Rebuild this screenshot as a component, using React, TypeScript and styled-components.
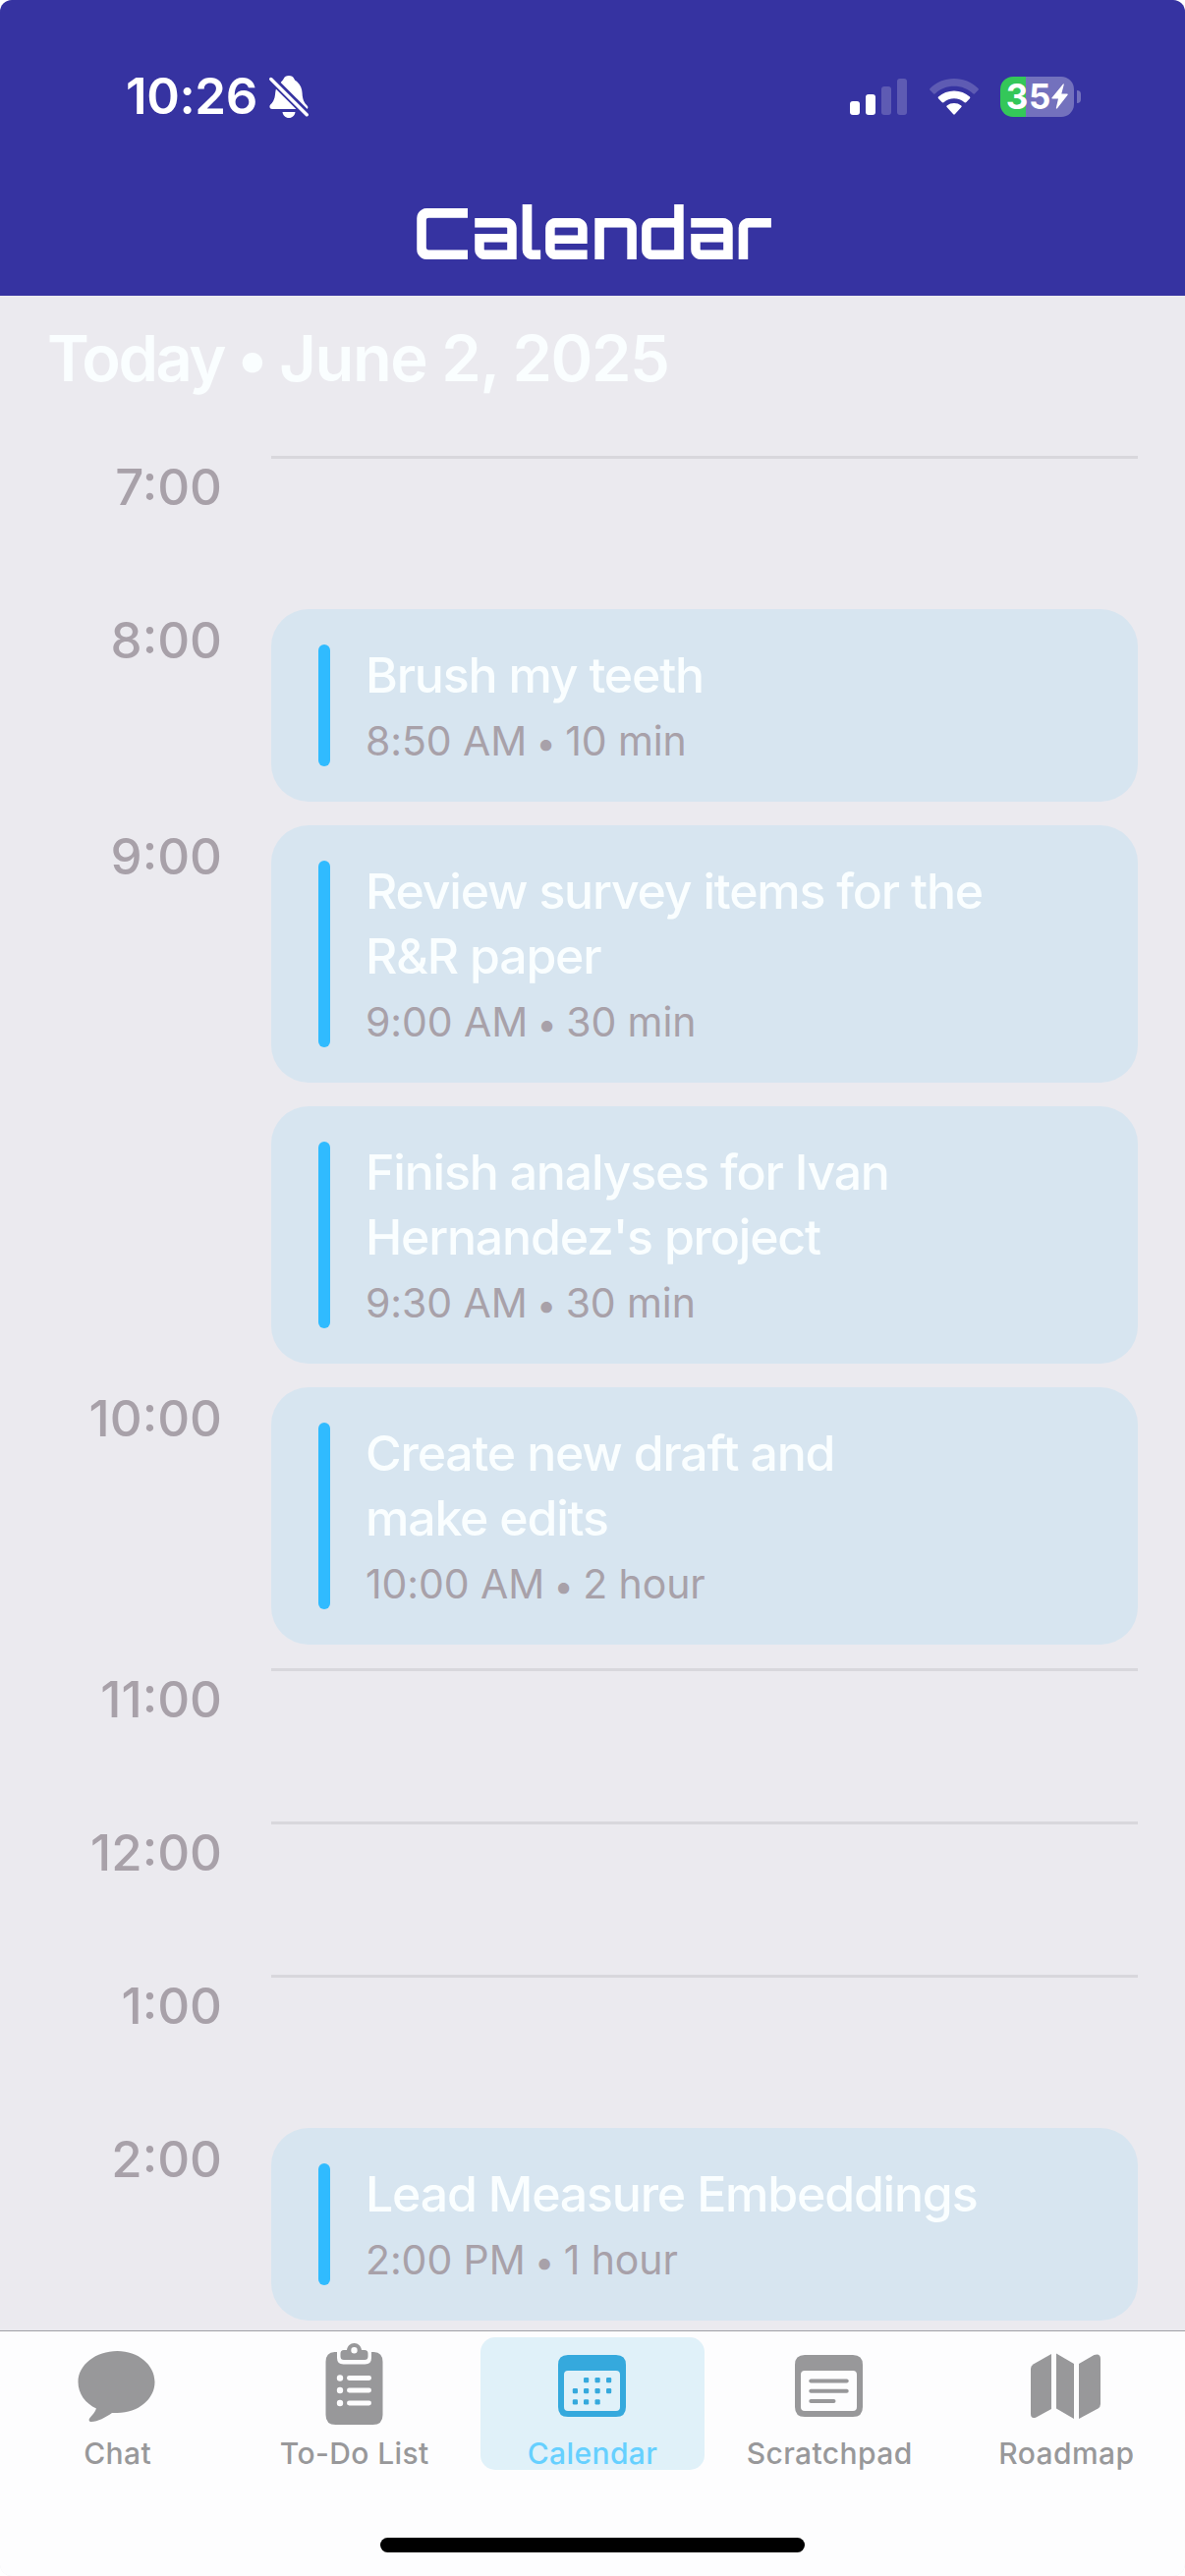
import React from "react";
import styled, { createGlobalStyle } from "styled-components";

const GlobalStyle = createGlobalStyle`
  *, *::before, *::after { box-sizing: border-box; }
  body { margin: 0; background: #ffffff; -webkit-font-smoothing: antialiased; }
`;

const Screen = styled.div`
  width: 1206px;
  height: 2622px;
  display: flex;
  flex-direction: column;
  overflow: hidden;
  border-radius: 12px;
  background: #ebeaef;
  font-family: Inter, "Liberation Sans", sans-serif;
`;

const Header = styled.header`
  flex: none;
  height: 301px;
  display: flex;
  flex-direction: column;
  background: #3633a1;
  color: #ffffff;
`;

const StatusBar = styled.div`
  height: 192px;
  padding: 4px 106px 0 128px;
  display: flex;
  align-items: center;
  justify-content: space-between;
`;

const StatusLeft = styled.div`
  display: flex;
  align-items: center;
  gap: 12px;
`;

const Clock = styled.span`
  font-size: 51px;
  line-height: 60px;
  font-weight: 600;
  letter-spacing: -0.4px;
`;

const StatusRight = styled.div`
  display: flex;
  align-items: center;
  gap: 22.5px;
`;

const Battery = styled.div`
  display: flex;
  align-items: center;
  gap: 3px;
`;

const BatteryBody = styled.div`
  width: 75px;
  height: 41px;
  border-radius: 13px;
  display: flex;
  align-items: center;
  justify-content: center;
  background: linear-gradient(90deg, #34c759 0 26px, #7371bd 26px);
  font-size: 35px;
  line-height: 41px;
  font-weight: 700;
  letter-spacing: 0.8px;
`;

const BatteryTip = styled.div`
  width: 4px;
  height: 13px;
  border-radius: 0 4px 4px 0;
  background: #7371bd;
`;

const ScreenTitle = styled.h1`
  margin: 0;
  height: 88px;
  line-height: 88px;
  text-align: center;
  font-family: Orbitron, "DejaVu Sans", sans-serif;
  font-size: 72px;
  font-weight: 700;
`;

const Agenda = styled.main`
  flex: none;
  height: 2071px;
  padding: 24px 48px 0;
  overflow: hidden;
`;

const DayHeading = styled.h2`
  margin: 0 0 59px;
  height: 80px;
  line-height: 80px;
  font-size: 65px;
  font-weight: 600;
  letter-spacing: -1.4px;
  color: #fafeff;
`;

const DayName = styled.span`
  letter-spacing: -2.5px;
`;

const HeadingDot = styled.span`
  margin: 0 -2.5px;
`;

const HourRow = styled.section`
  min-height: 156px;
  display: grid;
  grid-template-columns: 178px 1fr;
  column-gap: 50px;
`;

const HourLabel = styled.div`
  height: 62px;
  line-height: 63px;
  text-align: right;
  font-size: 51px;
  font-weight: 500;
  color: #a8a1a9;
`;

const HourSlots = styled.div<{ $empty: boolean }>`
  display: flex;
  flex-direction: column;
  gap: 24px;
  padding-bottom: ${(p) => (p.$empty ? 0 : 24)}px;
  border-top: ${(p) => (p.$empty ? "3px solid #d8d7dc" : "none")};
`;

const EventCard = styled.article`
  display: flex;
  gap: 36px;
  padding: 36px 48px;
  border-radius: 38px;
  background: #d7e5f0;
`;

const EventBar = styled.div`
  flex: none;
  width: 12px;
  border-radius: 6px;
  background: #30bbff;
`;

const EventBody = styled.div`
  flex: 1;
  margin-top: -2px;
`;

const EventTitle = styled.div`
  font-size: 50px;
  line-height: 66px;
  font-weight: 500;
  letter-spacing: -1.2px;
  color: #fafeff;
`;

const EventMeta = styled.div`
  height: 60px;
  padding-top: 5px;
  line-height: 58px;
  font-size: 41px;
  letter-spacing: -0.1px;
  color: #a8a1a9;
`;

const MetaDot = styled.span`
  margin: 0 -2px;
  font-size: 36px;
  line-height: 1;
`;

const TabBar = styled.nav`
  flex: none;
  height: 142px;
  border-top: 1px solid #a0a0a6;
  padding-top: 6px;
  display: grid;
  grid-template-columns: repeat(5, 1fr);
  justify-items: center;
  align-items: start;
  background: #fdfdfe;
`;

const Tab = styled.div<{ $active: boolean }>`
  width: 228px;
  height: 135px;
  border-radius: 15px;
  display: flex;
  flex-direction: column;
  align-items: center;
  background: ${(p) => (p.$active ? "#e0f1f9" : "transparent")};
  color: ${(p) => (p.$active ? "#35a9dd" : "#98989a")};

  &:nth-child(-n + 2) {
    padding-right: 2px;
  }
`;

const TabIcon = styled.svg`
  flex: none;
  width: 90px;
  height: 96px;
  fill: currentColor;
`;

const TabLabel = styled.span<{ $active: boolean }>`
  line-height: 44px;
  font-size: 30px;
  font-weight: 500;
  letter-spacing: 0.4px;
  color: ${(p) => (p.$active ? "#66d0ff" : "inherit")};
`;

const HomeArea = styled.footer`
  flex: 1;
  display: flex;
  justify-content: center;
  align-items: flex-start;
  padding-top: 69px;
  background: #fdfdfe;
`;

const HomeIndicator = styled.div`
  width: 432px;
  height: 15px;
  border-radius: 8px;
  background: #000000;
`;

const BellOff = () => (
  <svg width="40" height="43" viewBox="0 0 40 43">
    <path
      d="M12 6.5C13.5 4.5 14 4.6 14.6 3.2C15.6 1 17.4 0 20 0C22.600 0 24.400 1 25.400 3.200C26 4.800 27 5 28.600 6.400C32 9.400 33.400 13.500 33.600 18C33.800 24 35.500 27.500 38.500 30.500C39.800 31.800 39.600 32.800 38.500 34H3.200C0.900 34 0 32 0.600 30.400C1.200 29 3 28.500 4.500 25C6.400 21 5.800 18 6.800 14Z"
      fill="#fff"
    />
    <path d="M13.5 37H26.500C26 40.500 23.500 43 20 43C16.500 43 14 40.500 13.500 37Z" fill="#fff" />
    <path d="M-1 0L39.500 40.500" stroke="#3633a1" strokeWidth="8" />
    <path d="M1.800 3.500L38.200 39.800" stroke="#fff" strokeWidth="3.400" strokeLinecap="round" />
  </svg>
);

const Cellular = () => (
  <svg width="58" height="37" viewBox="0 0 58 37" fill="#fff">
    <rect x="0" y="23" width="10" height="14" rx="3" />
    <rect x="16" y="16" width="10" height="21" rx="3" />
    <rect x="32" y="8" width="10" height="29" rx="3" opacity="0.2" />
    <rect x="48" y="0" width="10" height="37" rx="3" opacity="0.2" />
  </svg>
);

const Wifi = () => (
  <svg width="50" height="37" viewBox="0 0 50 37" fill="#fff">
    <path
      opacity="0.2"
      d="M0.500 10C7 3.600 15.500 0 25 0S43 3.600 49.500 10.000Q50.300 10.900 49.500 11.700L45.800 15.400Q45 16 44.200 15.300C39 10.400 32.500 7.800 25 7.800S11 10.400 5.800 15.300Q5 16 4.200 15.400L0.500 11.700Q-0.300 10.900 0.500 10Z"
    />
    <path d="M9 18.600C13.400 14.600 19 12.500 25 12.500S36.600 14.600 41 18.600Q41.800 19.400 41 20.300L37.400 24.100Q36.500 25 35.600 24.200C32.600 21.600 29 20.300 25 20.300S17.400 21.600 14.400 24.200Q13.500 25 12.600 24.100L9 20.300Q8.200 19.400 9 18.600Z" />
    <path d="M17.700 27.400C19.800 25.700 22.300 24.900 25 24.900S30.200 25.700 32.300 27.400Q33.200 28.200 32.400 29L25.800 36.300Q25 37 24.200 36.300L17.600 29Q16.800 28.200 17.700 27.400Z" />
  </svg>
);

const Bolt = () => (
  <svg width="17" height="26" viewBox="0 0 17 26" fill="#fff">
    <path d="M12 0.500L0.500 14.500Q0 15.500 1 15.500H7L4.800 25Q5 26.200 6 25.300L16.700 11.500Q17 10.500 16 10.500H10.300L12.800 1Q12.800 0 12 0.500Z" />
  </svg>
);

type TabName = "Chat" | "To-Do List" | "Calendar" | "Scratchpad" | "Roadmap";

const glyphs: Record<TabName, React.ReactNode> = {
  Chat: (
    <path d="M45 14C66 14 83 28 83 45.500C83 63 66 77 45 77H39.500C33 81.500 25 86 18.500 86C16 86 15.400 83.900 17 82C19.500 79 22.500 76 23.500 72.500C12.500 67.500 5 57.500 5 45.500C5 28 23 14 45 14Z" />
  ),
  "To-Do List": (
    <>
      <path d="M25 15H27.500V21Q27.500 27.500 34 27.500H56Q62.500 27.500 62.500 21V15H65Q74 15.500 74 25V79Q74 89 64 89H26Q16 89 16 79V25Q16 15.500 25 15Z" />
      <path
        fillRule="evenodd"
        d="M34.500 13H37.500C38 9 41 6 45 6S52 9 52.500 13H55.500Q59 13 59 16.500V19.500Q59 23 55.500 23H34.500Q31 23 31 19.500V16.500Q31 13 34.500 13ZM45 10A3.200 3.200 0 1 0 45 16.400A3.200 3.200 0 1 0 45 10Z"
      />
      {[41.5, 54, 67].map((y) => (
        <g key={y} fill="#fdfdfe">
          <circle cx="30.500" cy={y} r="3.200" />
          <rect x="37.500" y={y - 2.4} width="25" height="4.800" rx="2.400" />
        </g>
      ))}
    </>
  ),
  Calendar: (
    <>
      <path
        fillRule="evenodd"
        d="M20.500 18H69.500Q79.500 18 79.500 28V71Q79.500 81 69.500 81H20.500Q10.500 81 10.500 71V28Q10.500 18 20.500 18ZM20.500 34Q16.500 34 16.500 38V71Q16.500 75 20.500 75H69.500Q73.500 75 73.500 71V38Q73.500 34 69.500 34Z"
      />
      {[
        [36.5, 41], [48, 41], [59.5, 41],
        [25.3, 52], [36.5, 52], [48, 52], [59.5, 52],
        [25.3, 63.3], [36.5, 63.3], [48, 63.3],
      ].map(([x, y]) => (
        <rect key={`${x}-${y}`} x={x} y={y} width="5.200" height="5.200" rx="1.200" />
      ))}
    </>
  ),
  Scratchpad: (
    <>
      <path
        fillRule="evenodd"
        d="M20.500 18H69.500Q79.500 18 79.500 28V71Q79.500 81 69.500 81H20.500Q10.500 81 10.500 71V28Q10.500 18 20.500 18ZM20.500 34Q16.500 34 16.500 38V71Q16.500 75 20.500 75H69.500Q73.500 75 73.500 71V38Q73.500 34 69.500 34Z"
      />
      <rect x="24.800" y="42.400" width="40.400" height="4" rx="2" />
      <rect x="24.800" y="52.700" width="40.400" height="4" rx="2" />
      <rect x="24.800" y="63" width="27.200" height="4" rx="2" />
    </>
  ),
  Roadmap: (
    <>
      <path d="M30.500 17V73L15 81.500Q9.500 83.500 9.500 78V32Q9.500 29 12 27.500Z" />
      <path d="M35.500 16.500L53.500 27V83L35.500 72.500Z" />
      <path d="M58.500 27L74 18Q80.500 16 80.500 22V68Q80.500 71 78 72.500L58.500 83Z" />
    </>
  ),
};

interface EventItem {
  title: string[];
  time: string;
  duration: string;
}

const hours: { label: string; events: EventItem[] }[] = [
  { label: "7:00", events: [] },
  { label: "8:00", events: [{ title: ["Brush my teeth"], time: "8:50 AM", duration: "10 min" }] },
  {
    label: "9:00",
    events: [
      { title: ["Review survey items for the", "R&R paper"], time: "9:00 AM", duration: "30 min" },
      { title: ["Finish analyses for Ivan", "Hernandez's project"], time: "9:30 AM", duration: "30 min" },
    ],
  },
  {
    label: "10:00",
    events: [{ title: ["Create new draft and", "make edits"], time: "10:00 AM", duration: "2 hour" }],
  },
  { label: "11:00", events: [] },
  { label: "12:00", events: [] },
  { label: "1:00", events: [] },
  { label: "2:00", events: [{ title: ["Lead Measure Embeddings"], time: "2:00 PM", duration: "1 hour" }] },
];

const tabs: TabName[] = ["Chat", "To-Do List", "Calendar", "Scratchpad", "Roadmap"];

export default function App() {
  return (
    <>
      <GlobalStyle />
      <Screen>
        <Header>
          <StatusBar>
            <StatusLeft>
              <Clock>10:26</Clock>
              <BellOff />
            </StatusLeft>
            <StatusRight>
              <Cellular />
              <Wifi />
              <Battery>
                <BatteryBody>
                  <span>35</span>
                  <Bolt />
                </BatteryBody>
                <BatteryTip />
              </Battery>
            </StatusRight>
          </StatusBar>
          <ScreenTitle>Calendar</ScreenTitle>
        </Header>
        <Agenda>
          <DayHeading>
            <DayName>Today</DayName> <HeadingDot>•</HeadingDot> June 2, 2025
          </DayHeading>
          {hours.map((hour) => (
            <HourRow key={hour.label}>
              <HourLabel>{hour.label}</HourLabel>
              <HourSlots $empty={hour.events.length === 0}>
                {hour.events.map((event) => (
                  <EventCard key={event.time}>
                    <EventBar />
                    <EventBody>
                      {event.title.map((line) => (
                        <EventTitle key={line}>{line}</EventTitle>
                      ))}
                      <EventMeta>
                        {event.time} <MetaDot>•</MetaDot> {event.duration}
                      </EventMeta>
                    </EventBody>
                  </EventCard>
                ))}
              </HourSlots>
            </HourRow>
          ))}
        </Agenda>
        <TabBar>
          {tabs.map((name) => {
            const active = name === "Calendar";
            return (
              <Tab key={name} $active={active}>
                <TabIcon viewBox="0.5 0 90 96">{glyphs[name]}</TabIcon>
                <TabLabel $active={active}>{name}</TabLabel>
              </Tab>
            );
          })}
        </TabBar>
        <HomeArea>
          <HomeIndicator />
        </HomeArea>
      </Screen>
    </>
  );
}
